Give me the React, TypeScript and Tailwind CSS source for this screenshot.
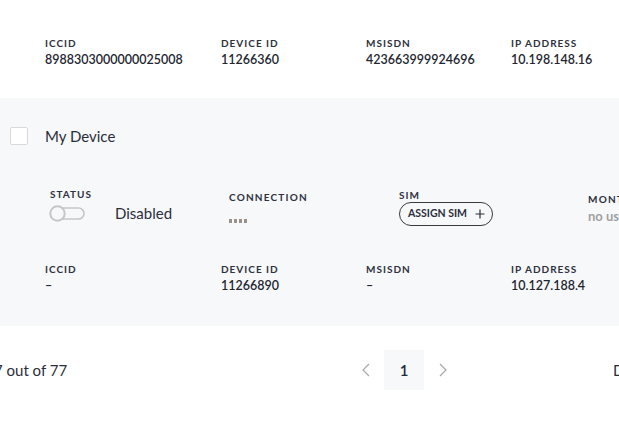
import React from "react";

const font = { fontFamily: "Lato, 'Noto Sans', sans-serif" };

function Field({ label, value, w }: { label: string; value: string; w: string }) {
  return (
    <div className={`${w} shrink-0 flex flex-col`}>
      <div className="text-[10px] leading-[12px] font-bold tracking-[0.1em] text-[#2e3140] whitespace-nowrap">{label}</div>
      <div className="mt-[3px] text-[12.5px] leading-[16px] font-semibold text-[#23262f] whitespace-nowrap">{value}</div>
    </div>
  );
}

function Row({ vals }: { vals: string[] }) {
  return (
    <div className="flex pl-[45px]">
      <Field label="ICCID" value={vals[0]} w="w-[176px]" />
      <Field label="DEVICE ID" value={vals[1]} w="w-[145px]" />
      <Field label="MSISDN" value={vals[2]} w="w-[145px]" />
      <Field label="IP ADDRESS" value={vals[3]} w="w-[120px]" />
    </div>
  );
}

function Toggle() {
  return (
    <svg width="37" height="17" viewBox="0 0 37 17" className="shrink-0">
      <rect x="1.5" y="3" width="33.5" height="11" rx="5.5" fill="none" stroke="#c6c6c6" strokeWidth="1.6" />
      <circle cx="8.5" cy="8.5" r="7.2" fill="#f7f8fa" stroke="#c6c6c6" strokeWidth="2" />
    </svg>
  );
}

export default function App() {
  return (
    <div className="w-[619px] h-[427px] overflow-hidden bg-white" style={font}>
      <div className="h-[98px] pt-[37px]">
        <Row vals={["8988303000000025008", "11266360", "423663999924696", "10.198.148.16"]} />
      </div>
      <div className="h-[228px] bg-[#f7f8fa] pt-[28px]">
        <div className="flex items-center pl-[10px] h-[20px]">
          <div className="w-[18px] h-[18px] shrink-0 border-[1.5px] border-[#d8d9dc] bg-white rounded-[2px]" />
          <div className="ml-[17px] text-[15px] leading-[20px] text-[#2b2e3a]">My Device</div>
        </div>
        <div className="flex mt-[42px] h-[75px]">
          <div className="w-[229px] shrink-0 pl-[49px] flex flex-col">
            <div className="pl-[1px] text-[10px] leading-[12px] font-bold tracking-[0.1em] text-[#2e3140]">STATUS</div>
            <div className="flex items-center mt-[4px]">
              <Toggle />
              <span className="ml-[29px] text-[15px] leading-[18px] text-[#2b2e3a]">Disabled</span>
            </div>
          </div>
          <div className="w-[170px] shrink-0 pt-[3px] flex flex-col">
            <div className="text-[10px] leading-[12px] font-bold tracking-[0.12em] text-[#2e3140]">CONNECTION</div>
            <div className="flex gap-[2px] mt-[16px]">
              <span className="w-[3px] h-[4px] bg-[#9a918b]" />
              <span className="w-[3px] h-[4px] bg-[#9a918b]" />
              <span className="w-[3px] h-[4px] bg-[#9a918b]" />
              <span className="w-[3px] h-[4px] bg-[#9a918b]" />
            </div>
          </div>
          <div className="w-[189px] shrink-0 pt-[1px] flex flex-col">
            <div className="text-[10px] leading-[12px] font-bold tracking-[0.1em] text-[#2e3140]">SIM</div>
            <div className="mt-[1px] w-[94px] h-[24px] rounded-full border border-[#3a3a40] flex items-center pl-[8px] gap-[8px]">
              <span className="text-[10.5px] font-bold text-[#2b2e3a] whitespace-nowrap">ASSIGN SIM</span>
              <svg width="10" height="10" viewBox="0 0 10 10" className="shrink-0">
                <path d="M5 0.5V9.5M0.5 5H9.5" stroke="#2b2e3a" strokeWidth="1.2" />
              </svg>
            </div>
          </div>
          <div className="shrink-0 pt-[5px] flex flex-col whitespace-nowrap">
            <div className="text-[10px] leading-[12px] font-bold tracking-[0.12em] text-[#2e3140]">MONTHLY USAGE</div>
            <div className="mt-[3px] text-[13px] leading-[16px] font-bold text-[#a0a0a0]">no usage</div>
          </div>
        </div>
        <Row vals={["–", "11266890", "–", "10.127.188.4"]} />
      </div>
      <div className="flex items-center h-[40px] mt-[24px]">
        <div className="w-[362px] shrink-0 -ml-[6px] text-[15px] text-[#2b2e3a] whitespace-nowrap">7 out of 77</div>
        <svg width="8" height="14" viewBox="0 0 8 14" className="ml-[6px] shrink-0">
          <polyline points="7,1 1,7 7,13" fill="none" stroke="#a8a8a8" strokeWidth="1.2" />
        </svg>
        <div className="ml-[14px] w-[40px] h-[40px] shrink-0 bg-[#f7f8fa] flex items-center justify-center text-[15px] font-semibold text-[#1f2a44]">1</div>
        <svg width="8" height="14" viewBox="0 0 8 14" className="ml-[15px] shrink-0">
          <polyline points="1,1 7,7 1,13" fill="none" stroke="#a8a8a8" strokeWidth="1.2" />
        </svg>
        <div className="ml-[166px] shrink-0 text-[15px] text-[#2b2e3a] whitespace-nowrap">Devices</div>
      </div>
    </div>
  );
}
